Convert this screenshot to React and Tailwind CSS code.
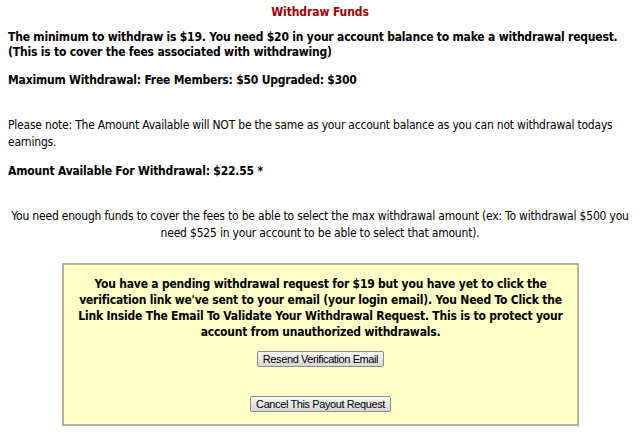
import React from "react";

const tahoma = { fontFamily: '"DejaVu Sans Condensed", "DejaVu Sans", sans-serif' };
const arial = { fontFamily: '"Liberation Sans", Arial, sans-serif' };

export default function App() {
  return (
    <div className="w-[640px] h-[432px] overflow-hidden bg-white text-black text-[12px]" style={tahoma}>
      <div className="pt-[5px] text-center font-bold leading-[15px] tracking-[-0.1px] text-[#a00000]">Withdraw Funds</div>
      <div className="px-2">
        <p className="mt-[10px] font-bold leading-[15px] tracking-[-0.2px]">
          The minimum to withdraw is $19. You need $20 in your account balance to make a withdrawal request.
          <br />
          (This is to cover the fees associated with withdrawing)
        </p>
        <p className="mt-[13px] font-bold leading-[15px] tracking-[-0.2px]">Maximum Withdrawal: Free Members: $50 Upgraded: $300</p>
        <p className="mt-[29px] leading-[17px] tracking-[-0.21px]">
          Please note: The Amount Available will NOT be the same as your account balance as you can not withdrawal todays
          <br />
          earnings.
        </p>
        <p className="mt-[13px] font-bold leading-[15px] tracking-[-0.2px]">Amount Available For Withdrawal: $22.55 *</p>
        <p className="mt-[29px] text-center leading-[17px] tracking-[-0.2px] whitespace-nowrap">
          You need enough funds to cover the fees to be able to select the max withdrawal amount (ex: To withdrawal $500 you
          <br />
          need $525 in your account to be able to select that amount).
        </p>
      </div>
      <div className="mt-[21px] ml-[62px] w-[517px] h-[163px] border-2 border-[#b8b296] bg-[#ffffc8] flex flex-col items-center">
        <p className="mt-[11px] text-center font-bold leading-[16px] tracking-[-0.2px] whitespace-nowrap">
          You have a pending withdrawal request for $19 but you have yet to click the
          <br />
          verification link we've sent to your email (your login email). You Need To Click the
          <br />
          Link Inside The Email To Validate Your Withdrawal Request. This is to protect your
          <br />
          account from unauthorized withdrawals.
        </p>
        <button
          className="mt-[11px] h-[16px] px-[5px] border border-[#8c8c8c] rounded-[2px] bg-gradient-to-b from-[#f8f8f8] to-[#d6d6d6] text-[11px] leading-[14px] tracking-[-0.4px] text-black"
          style={arial}
        >
          Resend Verification Email
        </button>
        <button
          className="mt-[29px] h-[16px] px-[5px] border border-[#8c8c8c] rounded-[2px] bg-gradient-to-b from-[#f8f8f8] to-[#d6d6d6] text-[11px] leading-[14px] tracking-[-0.4px] text-black"
          style={arial}
        >
          Cancel This Payout Request
        </button>
      </div>
    </div>
  );
}
